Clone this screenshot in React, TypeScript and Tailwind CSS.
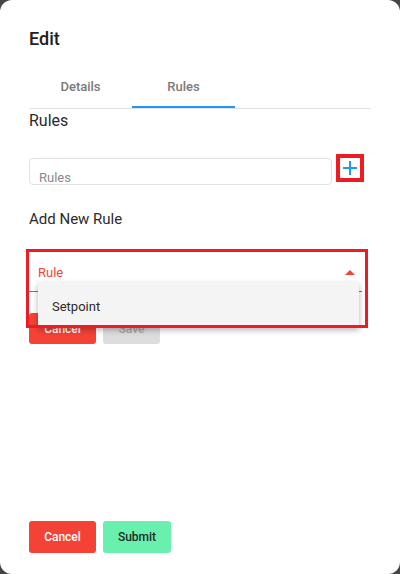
import React from 'react';

const App: React.FC = () => {
  return (
    <div className="w-[400px] h-[574px] bg-[#454545] font-['Roboto',sans-serif]">
      <div className="h-full bg-white rounded-[12px] px-[29px] flex flex-col">
        {/* Title */}
        <div className="pt-[27px] text-[18px] leading-[24px] font-medium text-[#212121]">Edit</div>

        {/* Tabs */}
        <div className="mt-[9px] flex border-b border-[#e0e0e0]">
          <div className="w-[103px] h-[48px] flex items-center justify-center pt-[6px] text-[13px] font-medium text-[#7a7a7a]">
            Details
          </div>
          <div className="w-[103px] h-[48px] flex items-center justify-center pt-[8px] text-[13px] font-medium text-[#7a7a7a] border-b-2 border-[#2196f3]">
            Rules
          </div>
        </div>

        {/* Rules list */}
        <div className="mt-[2px] text-[16px] leading-[20px] text-[#2b2b2b]">Rules</div>
        <div className="mt-[23px] flex items-start gap-[4px]">
          <div className="mt-[4px] w-[303px] h-[27px] rounded-[4px] border border-[#e2e2e2] pl-[9px] pt-[11px] text-[13px] leading-[15px] text-[#8a8a8a]">
            Rules
          </div>
          <div className="w-[28px] h-[28px] border-[4px] border-[#ed1c24] flex items-center justify-center">
            <svg width="16" height="16" viewBox="0 0 16 16">
              <path d="M8 1v14M1 8h14" stroke="#2196f3" strokeWidth="2" fill="none" />
            </svg>
          </div>
        </div>

        {/* Add new rule */}
        <div className="mt-[24px] text-[15px] leading-[20px] text-[#2b2b2b]">Add New Rule</div>
        <div className="relative mt-[26px]">
          <div className="w-[333px] h-[37px] border-b border-[#f44336] flex items-center justify-between pl-[9px] pr-[7px]">
            <span className="text-[13px] text-[#f44336]">Rule</span>
            <svg width="10" height="6" viewBox="0 0 10 6">
              <path d="M0 5L5 0L10 5Z" fill="#f44336" />
            </svg>
          </div>
          <div className="mt-[21px] flex gap-[7px]">
            <button className="w-[67px] h-[31px] rounded-[3px] bg-[#f44336] text-white text-[12px] font-medium">Cancel</button>
            <button className="w-[57px] h-[31px] rounded-[3px] bg-[#dddddd] text-[#a8a8a8] text-[12px] font-medium">Save</button>
          </div>

          {/* Open menu */}
          <div className="absolute left-[9px] top-[27px] w-[321px] h-[45px] bg-[#f4f4f4] shadow-[0_3px_6px_rgba(0,0,0,0.3)] pl-[14px] pt-[16px] text-[13px] leading-[18px] text-[#2b2b2b]">
            Setpoint
          </div>
          {/* Highlight */}
          <div className="absolute left-[-3px] top-[-6px] w-[342px] h-[79px] border-[3px] border-[#ed1c24]" />
        </div>

        <div className="flex-1" />

        {/* Footer */}
        <div className="pb-[21px] flex gap-[7px]">
          <button className="w-[67px] h-[32px] rounded-[3px] bg-[#f44336] text-white text-[12px] font-medium">Cancel</button>
          <button className="w-[68px] h-[32px] rounded-[3px] bg-[#69f0ae] text-[#1d2b24] text-[12px] font-medium">Submit</button>
        </div>
      </div>
    </div>
  );
};

export default App;
